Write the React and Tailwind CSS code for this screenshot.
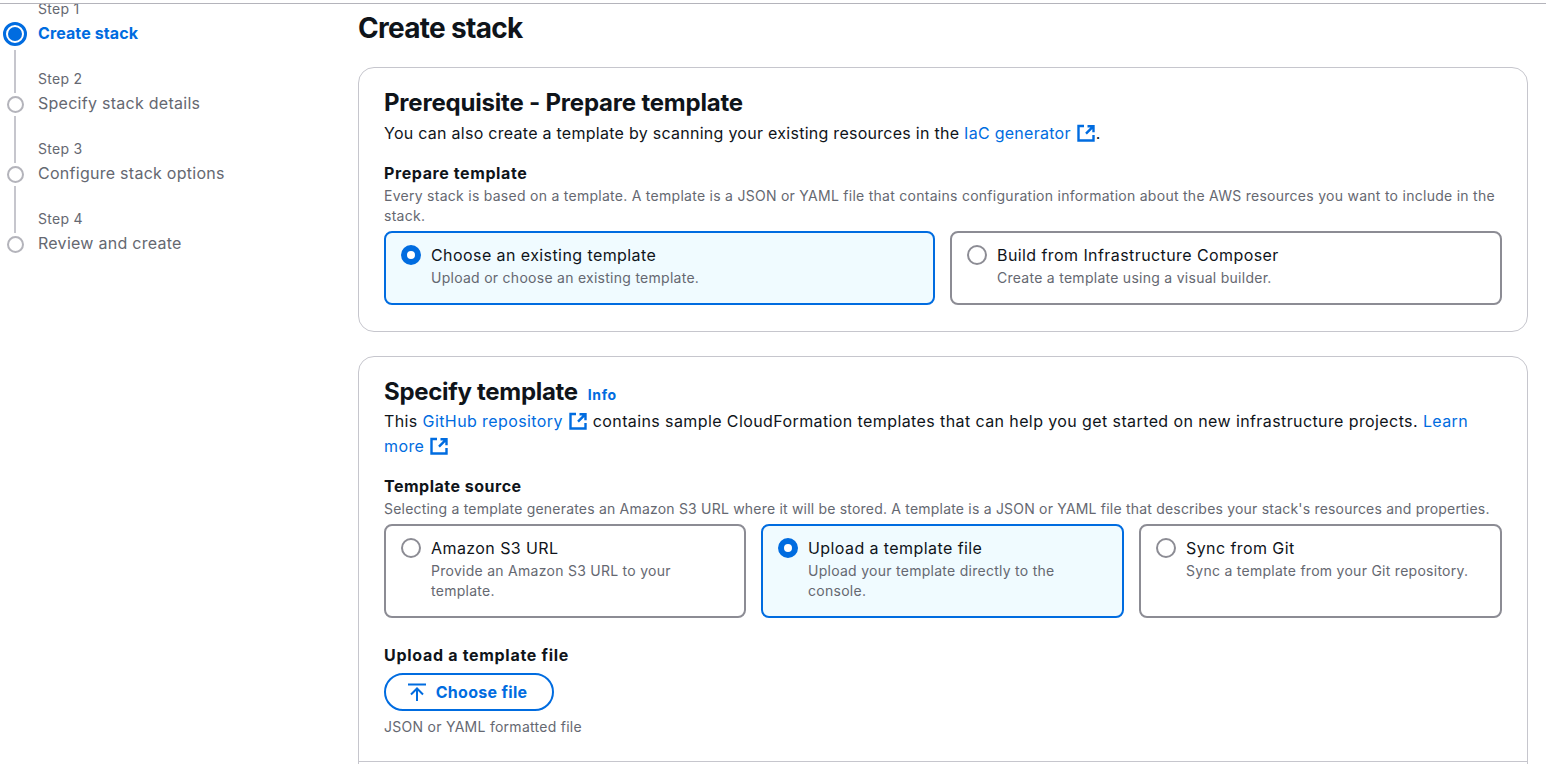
import React from "react";

const ExternalIcon = () => (
  <svg viewBox="0 0 18 18" className="ml-[6px] mr-px inline-block h-[18px] w-[18px] align-[-3px]" fill="none" stroke="#006ce0" strokeWidth="2.4">
    <path d="M7 2H1.500v14.500h15V11" />
    <path d="M10.500 2.200h6v6M16 2.700L9 9.700" />
  </svg>
);

const steps = [
  { n: "Step 1", title: "Create stack", active: true },
  { n: "Step 2", title: "Specify stack details" },
  { n: "Step 3", title: "Configure stack options" },
  { n: "Step 4", title: "Review and create" },
];

const Steps = () => (
  <div className="-mt-[5px] w-[358px] shrink-0">
    {steps.map((s, i) => (
      <div key={s.n} className="relative h-[70px] pl-[38px]">
        <div className="h-5 text-sm leading-5 text-[#656871]">{s.n}</div>
        <div className={`mt-[2px] h-6 text-base leading-6 ${s.active ? "font-bold tracking-[0.1px] text-[#006ce0]" : "text-[#656871]"}`}>{s.title}</div>
        {s.active ? (
          <div className="absolute left-[3px] top-[23px] flex h-6 w-6 items-center justify-center rounded-full border-[3px] border-[#006ce0]">
            <div className="h-[14px] w-[14px] rounded-full bg-[#006ce0]" />
          </div>
        ) : (
          <div className="absolute left-[7px] top-[27px] h-[17px] w-[17px] rounded-full border-2 border-[#b4b4bb]" />
        )}
        {i < 3 && <div className={`absolute left-[14px] w-[2px] bg-[#c6c6cd] ${s.active ? "top-[51px] h-[43px]" : "top-[47px] h-[47px]"}`} />}
      </div>
    ))}
  </div>
);

const Tile = ({ title, desc, selected, className }) => (
  <div className={`flex gap-[10px] rounded-lg border-2 pl-[15px] pt-[10px] ${selected ? "border-[#006ce0] bg-[#f0fbff]" : "border-[#8c8c94] bg-white"} ${className}`}>
    {selected ? (
      <div className="mt-[2px] h-5 w-5 shrink-0 rounded-full border-[6px] border-[#006ce0] bg-white" />
    ) : (
      <div className="mt-[2px] h-5 w-5 shrink-0 rounded-full border-2 border-[#8c8c94] bg-white" />
    )}
    <div className="min-w-0">
      <div className="text-base leading-6 tracking-[0.42px] text-[#0f141a]">{title}</div>
      <div className="mt-px text-sm leading-5 text-[#656871]">{desc}</div>
    </div>
  </div>
);

export default function App() {
  return (
    <div className="h-[764px] w-[1546px] overflow-hidden bg-white font-['Inter',sans-serif] tracking-[0.27px] text-[#0f141a]">
      <div className="mt-[3px] h-px bg-[#b4b4bb]" />
      <div className="flex h-[760px] overflow-hidden">
        <Steps />
        <div className="w-[1170px]">
          <h1 className="mt-[6px] h-9 text-[28px] font-bold leading-9 tracking-[-0.7px]">Create stack</h1>

          <section className="mt-[21px] h-[265px] rounded-2xl border border-[#c6c6cd] px-[25px] pt-[20px]">
            <h2 className="text-2xl font-bold leading-[30px] tracking-[-0.2px]">Prerequisite - Prepare template</h2>
            <p className="mt-[3px] text-base leading-6">
              You can also create a template by scanning your existing resources in the{" "}
              <a className="text-[#006ce0]">IaC generator</a>
              <ExternalIcon />.
            </p>
            <div className="mt-[16px] text-base font-bold leading-6 tracking-[0.6px]">Prepare template</div>
            <p className="mt-px text-sm leading-5 text-[#656871]">
              Every stack is based on a template. A template is a JSON or YAML file that contains configuration information about the AWS resources you want to include in the stack.
            </p>
            <div className="mt-[5px] grid grid-cols-[551px_1fr] gap-[15px]">
              <Tile className="h-[74px]" selected title="Choose an existing template" desc="Upload or choose an existing template." />
              <Tile className="h-[74px]" title="Build from Infrastructure Composer" desc="Create a template using a visual builder." />
            </div>
          </section>

          <section className="mt-6 h-[500px] rounded-t-2xl border border-[#c6c6cd] px-[25px] pt-[20px]">
            <div className="flex items-baseline gap-[10px]">
              <h2 className="text-2xl font-bold leading-[30px] tracking-[-0.3px]">Specify template</h2>
              <a className="text-sm font-bold tracking-[0.6px] text-[#006ce0]">Info</a>
            </div>
            <p className="mt-[2px] text-base leading-[25px] tracking-[0.4px]">
              This <a className="text-[#006ce0]">GitHub repository</a>
              <ExternalIcon />{" "}
              contains sample CloudFormation templates that can help you get started on new infrastructure projects.{" "}
              <a className="text-[#006ce0]">Learn more</a>
              <ExternalIcon />
            </p>
            <div className="mt-[15px] text-base font-bold leading-6 tracking-[0.5px]">Template source</div>
            <p className="mt-px text-sm leading-5 tracking-[0.2px] text-[#656871]">
              Selecting a template generates an Amazon S3 URL where it will be stored. A template is a JSON or YAML file that describes your stack's resources and properties.
            </p>
            <div className="mt-[5px] grid grid-cols-[362px_363px_1fr] gap-[15px]">
              <Tile className="h-[94px] pr-4" title="Amazon S3 URL" desc="Provide an Amazon S3 URL to your template." />
              <Tile className="h-[94px] pr-4" selected title="Upload a template file" desc="Upload your template directly to the console." />
              <Tile className="h-[94px] pr-4" title="Sync from Git" desc="Sync a template from your Git repository." />
            </div>
            <div className="mt-[25px] text-base font-bold leading-6 tracking-[0.7px]">Upload a template file</div>
            <button className="mt-[6px] flex h-[38px] w-[170px] items-center justify-center gap-[10px] rounded-full border-2 border-[#006ce0] pr-[3px] text-base font-bold tracking-[0.3px] text-[#006ce0]">
              <svg viewBox="0 0 18 18" className="h-[18px] w-[18px]" fill="none" stroke="#006ce0" strokeWidth="2">
                <path d="M0 1.500h18M9 18V5.500M3 11.500l6-6 6 6" />
              </svg>
              Choose file
            </button>
            <p className="mt-[6px] text-sm leading-5 text-[#656871]">JSON or YAML formatted file</p>
            <div className="-mx-[25px] mt-[24px] h-px bg-[#c6c6cd]" />
          </section>
        </div>
      </div>
    </div>
  );
}
